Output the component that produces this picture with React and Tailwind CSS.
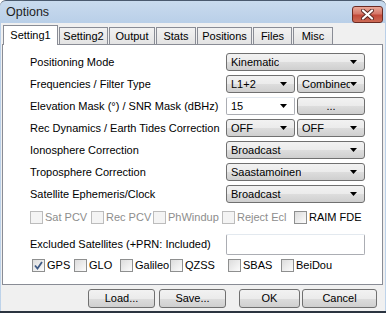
const font = { fontFamily: '"Liberation Sans", Arial, sans-serif' };

function Arrow() {
  return (
    <svg width="7" height="4" viewBox="0 0 7 4" className="shrink-0">
      <path d="M0 0H7L3.5 4Z" fill="#000" />
    </svg>
  );
}

function Combo({ value, className = '' }) {
  return (
    <div
      className={`h-[18px] flex items-center justify-between pl-[4px] pr-[7px] rounded-[3px] border border-[#707070] bg-[linear-gradient(#f2f2f2_0%,#ebebeb_50%,#dddddd_51%,#cfcfcf_100%)] ${className}`}
    >
      <span className="leading-none whitespace-nowrap overflow-hidden">{value}</span>
      <Arrow />
    </div>
  );
}

function EditCombo({ value, className = '' }) {
  return (
    <div className={`h-[18px] flex items-center justify-between pl-[4px] pr-[7px] rounded-[2px] border border-[#abadb3] border-t-[#e3e9ef] bg-white ${className}`}>
      <span className="leading-none">{value}</span>
      <Arrow />
    </div>
  );
}

function Button({ children, className = '' }) {
  return (
    <div
      className={`flex items-center justify-center rounded-[3px] border border-[#707070] bg-[linear-gradient(#f2f2f2_0%,#ebebeb_50%,#dddddd_51%,#cfcfcf_100%)] ${className}`}
    >
      {children}
    </div>
  );
}

function Check({ label, checked, disabled, className = '' }) {
  return (
    <div className={`flex items-center shrink-0 ${className}`}>
      <div
        className={`shrink-0 w-[13px] h-[13px] border flex items-center justify-center ${
          disabled
            ? 'border-[#bcbcbc] bg-[#f4f4f4]'
            : 'border-[#8e8f8f] bg-[linear-gradient(135deg,#dcdcdc,#fcfcfc)]'
        }`}
      >
        {checked && (
          <svg width="9" height="9" viewBox="0 0 9 9">
            <path d="M1 4.5L3.5 7.5L8 1" stroke="#3f5a85" strokeWidth="1.8" fill="none" />
          </svg>
        )}
      </div>
      <span className={`ml-[2px] leading-none whitespace-nowrap ${disabled ? 'text-[#8d8d8d]' : 'text-black'}`}>{label}</span>
    </div>
  );
}

function Row({ label, children }) {
  return (
    <div className="h-[18px] mb-[4px] flex items-center justify-between">
      <span className="leading-none whitespace-nowrap">{label}</span>
      <div className="w-[139px] flex gap-[2px]">{children}</div>
    </div>
  );
}

const tabs = [
  { name: 'Setting2', w: 'w-[49px]' },
  { name: 'Output', w: 'w-[46px]' },
  { name: 'Stats', w: 'w-[40px]' },
  { name: 'Positions', w: 'w-[55px]' },
  { name: 'Files', w: 'w-[39px]' },
  { name: 'Misc', w: 'w-[40px]' },
];

export default function App() {
  return (
    <div
      style={font}
      className="w-[386px] h-[313px] flex flex-col bg-[linear-gradient(#c9dbee,#b9cfe8_22px,#bed3ea)] border-t border-t-[#4a5a6e] rounded-t-[6px] overflow-hidden text-[11px] text-black"
    >
      {/* title bar */}
      <div className="h-[22px] flex items-center justify-between pl-[6px] pr-[3px]">
        <span className="text-[12.5px] leading-none text-[#1e1e1e] mt-[1px]">Options</span>
        <div className="w-[31px] h-[17px] mt-[4px] rounded-[3px] border border-[#6b2a22] bg-[linear-gradient(#e9a797,#d5786a_45%,#c24a3a_55%,#cc6a55)] flex items-center justify-center">
          <svg width="13" height="11" viewBox="0 0 13 11">
            <path d="M2 1.5L11 9.5M11 1.5L2 9.5" stroke="#5a2a24" strokeWidth="4" strokeLinecap="round" />
            <path d="M2 1.5L11 9.5M11 1.5L2 9.5" stroke="#fff" strokeWidth="2.2" strokeLinecap="round" />
          </svg>
        </div>
      </div>

      {/* client area */}
      <div className="mx-[1px] flex-1 bg-[#f0f0f0] flex flex-col">
        <div className="h-[21px] flex items-end pl-[2px]">
          <div className="relative z-10 w-[55px] h-[20px] mb-[-1px] bg-white border border-b-0 border-[#898c95] flex items-start justify-center pt-[4px]">
            <span className="leading-none">Setting1</span>
          </div>
          <div className="flex gap-[1px] ml-[1px]">
            {tabs.map((t) => (
              <div
                key={t.name}
                className={`${t.w} h-[17px] border border-b-0 border-[#898c95] bg-[linear-gradient(#f2f2f2,#e3e3e3)] flex items-center justify-center`}
              >
                <span className="leading-none">{t.name}</span>
              </div>
            ))}
          </div>
        </div>

        <div className="ml-[1px] w-[381px] h-[241px] border border-[#898c95] bg-white pl-[27px] pr-[17px] pt-[8px]">
          <Row label="Positioning Mode">
            <Combo value="Kinematic" className="w-full" />
          </Row>
          <Row label="Frequencies / Filter Type">
            <Combo value="L1+2" className="w-[69px]" />
            <Combo value="Combined" className="w-[68px]" />
          </Row>
          <Row label="Elevation Mask (°) / SNR Mask (dBHz)">
            <EditCombo value="15" className="w-[69px]" />
            <Button className="w-[68px] h-[18px]">...</Button>
          </Row>
          <Row label="Rec Dynamics / Earth Tides Correction">
            <Combo value="OFF" className="w-[69px]" />
            <Combo value="OFF" className="w-[68px]" />
          </Row>
          <Row label="Ionosphere Correction">
            <Combo value="Broadcast" className="w-full" />
          </Row>
          <Row label="Troposphere Correction">
            <Combo value="Saastamoinen" className="w-full" />
          </Row>
          <Row label="Satellite Ephemeris/Clock">
            <Combo value="Broadcast" className="w-full" />
          </Row>

          <div className="h-[20px] mt-[1px] flex items-center">
            <Check label="Sat PCV" disabled className="w-[61px]" />
            <Check label="Rec PCV" disabled className="w-[62px]" />
            <Check label="PhWindup" disabled className="w-[69px]" />
            <Check label="Reject Ecl" disabled className="w-[72px]" />
            <Check label="RAIM FDE" />
          </div>

          <div className="h-[22px] mt-[6px] flex items-center justify-between">
            <span className="leading-none whitespace-nowrap">Excluded Satellites (+PRN: Included)</span>
            <div className="w-[139px] h-[21px] border border-[#abadb3] border-t-[#e3e9ef] rounded-[2px] bg-white" />
          </div>

          <div className="h-[16px] mt-[2px] flex items-center pl-[2px]">
            <Check label="GPS" checked className="w-[42px]" />
            <Check label="GLO" className="w-[46px]" />
            <Check label="Galileo" className="w-[50px]" />
            <Check label="QZSS" className="w-[58px]" />
            <Check label="SBAS" className="w-[53px]" />
            <Check label="BeiDou" />
          </div>
        </div>

        <div className="flex-1 flex items-center pl-[87px]">
          <Button className="w-[67px] h-[19px]">Load...</Button>
          <Button className="w-[67px] h-[19px] ml-[4px]">Save...</Button>
          <Button className="w-[61px] h-[19px] ml-[13px]">OK</Button>
          <Button className="w-[75px] h-[19px] ml-[2px]">Cancel</Button>
        </div>
      </div>
      <div className="h-[2px] bg-[#2b3440]" />
    </div>
  );
}
